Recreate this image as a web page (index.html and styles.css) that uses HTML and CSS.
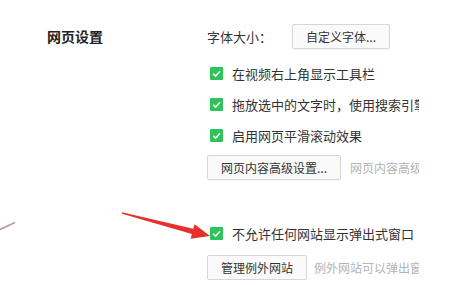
FILE: index.html
```html
<!DOCTYPE html>
<html lang="zh-CN">
<head>
<meta charset="UTF-8" />
<meta name="viewport" content="width=device-width,initial-scale=1.0" />
<title>网页设置</title>
<link rel="stylesheet" href="styles.css">
</head>
<body>
  <div class="page">
    <div class="side">
      <h2 class="title">网页设置</h2>
    </div>

    <div class="options">
      <div class="row font-row">
        <span class="label">字体大小：</span>
        <button class="btn">自定义字体...</button>
      </div>

      <div class="checks">
        <label class="check"><span class="box"><svg viewBox="0 0 13 13"><path d="M3.2 6.8 L5.6 9.1 L10 4.2" /></svg></span>在视频右上角显示工具栏</label>
        <label class="check"><span class="box"><svg viewBox="0 0 13 13"><path d="M3.2 6.8 L5.6 9.1 L10 4.2" /></svg></span>拖放选中的文字时，使用搜索引擎打开</label>
        <label class="check"><span class="box"><svg viewBox="0 0 13 13"><path d="M3.2 6.8 L5.6 9.1 L10 4.2" /></svg></span>启用网页平滑滚动效果</label>
      </div>

      <div class="row btn-row">
        <button class="btn">网页内容高级设置...</button>
        <span class="note">网页内容高级设置</span>
      </div>

      <div class="checks popup">
        <label class="check"><span class="box"><svg viewBox="0 0 13 13"><path d="M3.2 6.8 L5.6 9.1 L10 4.2" /></svg></span>不允许任何网站显示弹出式窗口</label>
      </div>

      <div class="row btn-row last">
        <button class="btn">管理例外网站</button>
        <span class="note">例外网站可以弹出窗口</span>
      </div>
    </div>
  </div>

  <!-- 标注箭头 -->
  <svg class="marks" viewBox="0 0 459 287">
    <line x1="0" y1="229.5" x2="15" y2="222.5" stroke="#b49cb4" stroke-width="1.8" />
    <polygon points="122,212.2 193.3,228.8 194.6,224.2 210,236 190.6,238.8 191.9,234 122,213.8" fill="#e7302b" />
  </svg>
</body>
</html>
```

FILE: styles.css
```css
body { margin: 0; background: #fff; font-family: "Noto Sans CJK SC", "Noto Sans", sans-serif; color: #333; font-size: 13px; }
.page { display: flex; padding-top: 24px; }
.side { width: 207px; padding-left: 47px; box-sizing: border-box; }
.title { margin: 0; font-size: 14px; line-height: 25px; font-weight: bold; color: #222; }
.options { width: 212px; overflow: hidden; white-space: nowrap; }
.row { display: flex; align-items: center; height: 25px; }
.label { width: 85px; }
.btn { height: 25px; padding: 0 13px; border: 1px solid #d6d6d6; border-radius: 2px; background: #fafafa; font-family: inherit; font-size: 12px; color: #333; box-shadow: 0 1px 1px rgba(0,0,0,0.04); }
.note { margin-left: 9px; font-size: 12px; color: #b3b3b3; }
.checks { margin-top: 9px; }
.check { display: flex; align-items: center; height: 31px; }
.box { width: 13px; height: 13px; margin: 0 9px 0 3px; background: #2ec45a; border-radius: 1px; display: flex; }
.box svg { width: 13px; height: 13px; }
.box path { fill: none; stroke: #fff; stroke-width: 1.5; }
.btn-row { margin-top: 4px; }
.popup { margin-top: 38px; }
.last { margin-top: 5px; height: 26px; }
.last .note { margin-left: 7px; }
.marks { position: absolute; left: 0; top: 0; width: 459px; height: 287px; pointer-events: none; }
```
